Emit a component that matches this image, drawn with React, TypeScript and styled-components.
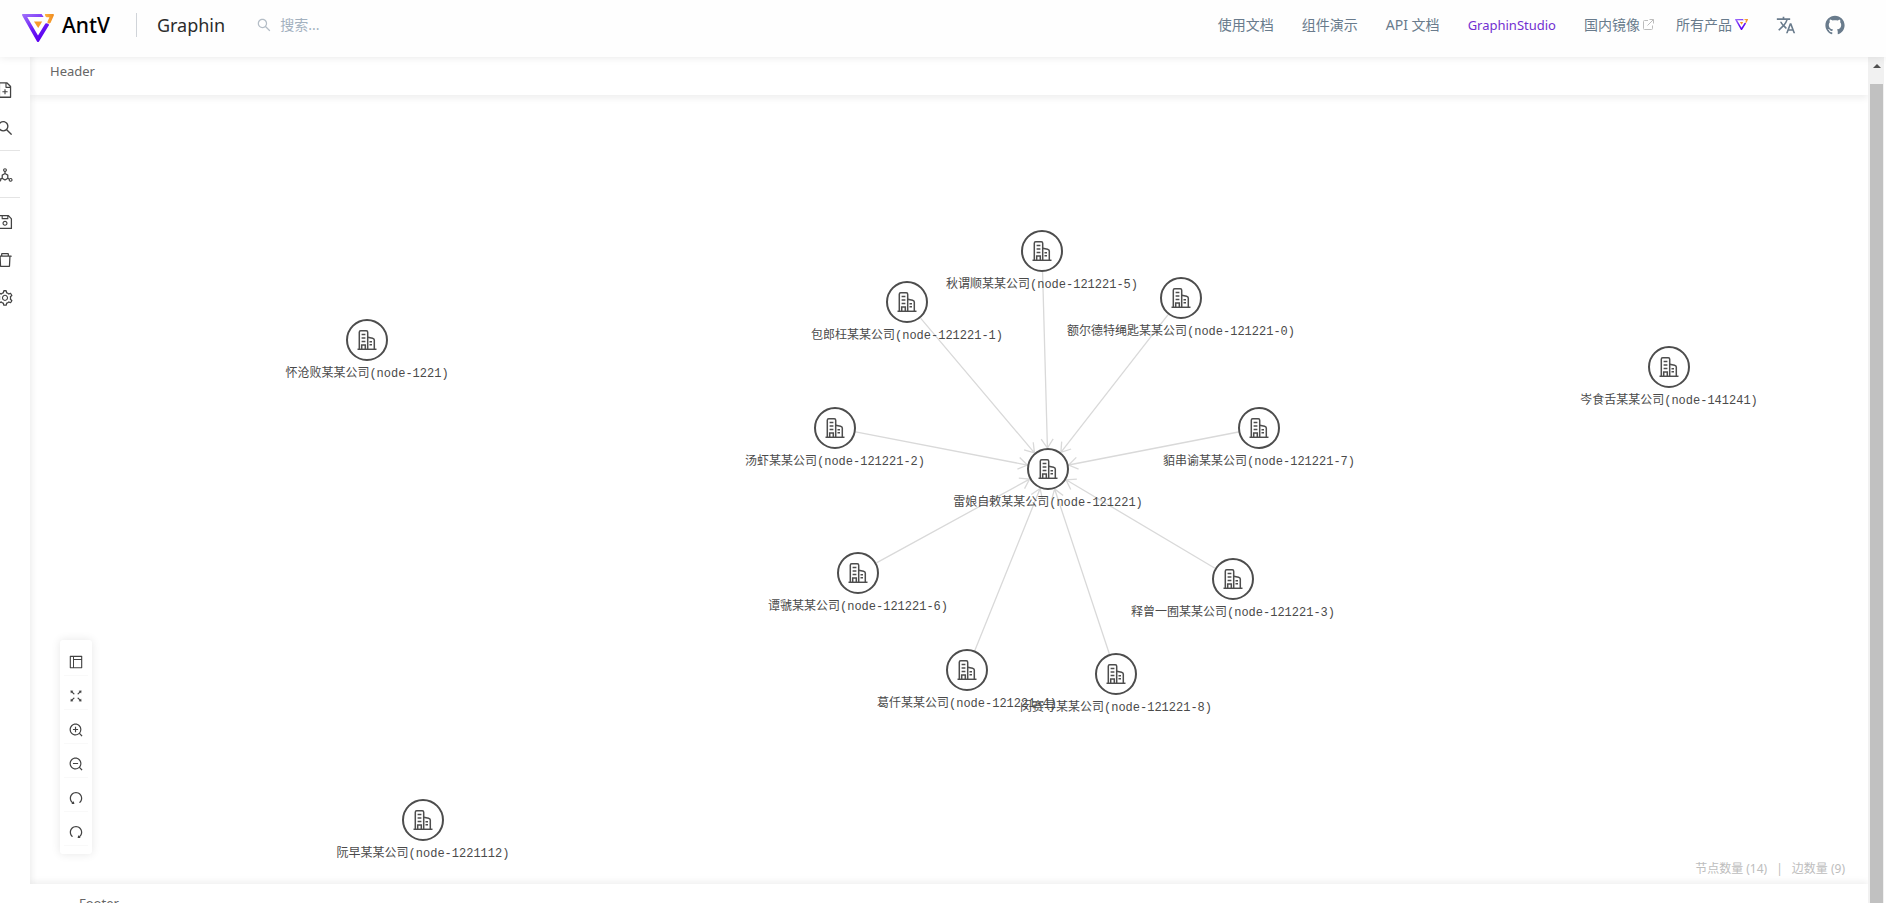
import React from "react";
import styled, { createGlobalStyle } from "styled-components";
import {
  AiFillGithub,
  AiOutlineDelete,
  AiOutlineDeploymentUnit,
  AiOutlineFileAdd,
  AiOutlineFullscreen,
  AiOutlineLayout,
  AiOutlineRedo,
  AiOutlineSave,
  AiOutlineSearch,
  AiOutlineSetting,
  AiOutlineUndo,
  AiOutlineZoomIn,
  AiOutlineZoomOut,
} from "react-icons/ai";
import { MdTranslate } from "react-icons/md";

const GlobalStyle = createGlobalStyle`
  *, *::before, *::after { box-sizing: border-box; }
  body {
    margin: 0;
    background: #fff;
    color: #666;
    font-family: "Noto Sans", "Noto Sans CJK SC", sans-serif;
    font-size: 14px;
    line-height: 22px;
  }
  button, input { font: inherit; }
`;

const Page = styled.div`
  display: flex;
  flex-direction: column;
  height: 100vh;
  overflow: hidden;
`;

/* ---------- site header ---------- */

const SiteHeader = styled.header`
  position: relative;
  z-index: 2;
  flex: none;
  display: flex;
  align-items: center;
  justify-content: space-between;
  height: 57px;
  padding: 0 40px 8px 22px;
  background: #fefefe;
  box-shadow: 0 1px 8px rgba(0, 0, 0, 0.08);
`;

const Brand = styled.div`
  display: flex;
  align-items: center;
`;

const BrandLink = styled.a`
  display: flex;
  align-items: center;
  gap: 8px;
  color: #000;
  font-size: 21px;
  font-weight: 500;
  text-decoration: none;

  svg {
    margin-top: 6px;
  }
`;

const ProductName = styled.a`
  margin-left: 20px;
  padding-left: 20px;
  border-left: 1px solid #d0d4d9;
  color: #2b2b2b;
  font-size: 18px;
  line-height: 24px;
  text-decoration: none;
`;

const BrandDivided = styled(ProductName)`
  margin-left: 26px;
`;

const SearchLabel = styled.label`
  display: flex;
  align-items: center;
  gap: 8px;
  margin-left: 31px;
  color: #b4bdc6;
`;

const SearchInput = styled.input`
  width: 160px;
  padding: 0;
  border: 0;
  outline: 0;
  background: transparent;
  color: #697b8c;

  &::placeholder {
    color: #a3b1bf;
    opacity: 1;
  }
`;

const Nav = styled.nav`
  display: flex;
  align-items: center;
  gap: 28px;
`;

const NavLink = styled.a<{ $active?: boolean }>`
  display: flex;
  align-items: center;
  gap: 3px;
  color: ${(p) => (p.$active ? "#722ed1" : "#697b8c")};
  font-size: ${(p) => (p.$active ? 13 : 14)}px;
  text-decoration: none;
  white-space: nowrap;
`;

const NavCluster = styled.div`
  display: flex;
  align-items: center;
  gap: 22px;
`;

/* ---------- workspace ---------- */

const Body = styled.div`
  flex: 1;
  display: flex;
  min-height: 0;
  padding-right: 2px;
`;

const Sidebar = styled.aside`
  position: relative;
  z-index: 1;
  flex: none;
  width: 30px;
  overflow: hidden;
  padding-top: 14px;
`;

/* The icon rail is scrolled partly past the left edge of the window. */
const Rail = styled.div`
  display: flex;
  flex-direction: column;
  width: 30px;
  margin-left: -10px;
`;

const RailButton = styled.button`
  display: flex;
  align-items: center;
  justify-content: center;
  height: 38px;
  padding: 0;
  border: 0;
  background: transparent;
  color: #434343;
  font-size: 18px;
`;

const RailDivider = styled.hr`
  width: 100%;
  margin: 3px 0 5px;
  border: 0;
  border-top: 1px solid #e4e4e4;
`;

const Workspace = styled.main`
  flex: 1;
  display: flex;
  flex-direction: column;
  min-width: 0;
  overflow: hidden;
  box-shadow: inset 6px 0 6px -4px rgba(0, 0, 0, 0.07);
`;

const PanelHeader = styled.div`
  flex: none;
  height: 38px;
  padding: 3px 20px;
  font-size: 13px;
  box-shadow: 0 3px 7px rgba(0, 0, 0, 0.07);
`;

const Canvas = styled.section`
  position: relative;
  flex: 1;
  min-height: 0;
`;

const PanelFooter = styled.footer`
  flex: none;
  height: 19px;
  padding: 8px 49px;
  overflow: hidden;
  background: #fff;
  font-size: 13px;
  box-shadow: 0 -2px 7px rgba(0, 0, 0, 0.07);
`;

const Edges = styled.svg`
  position: absolute;
  inset: 0;
  width: 100%;
  height: 100%;
`;

const Node = styled.div`
  position: absolute;
  display: flex;
  flex-direction: column;
  align-items: center;
  gap: 5px;
  width: 240px;
  margin: -21px 0 0 -120px;
`;

const NodeCircle = styled.div`
  display: flex;
  align-items: center;
  justify-content: center;
  width: 42px;
  height: 42px;
  border: 2px solid #4d4d4d;
  border-radius: 50%;
  background: #fff;
  color: #4d4d4d;
`;

const NodeLabel = styled.span`
  color: #4a4a4a;
  font-family: "Liberation Mono", "Noto Sans CJK SC", monospace;
  font-size: 12px;
  line-height: 16px;
  white-space: nowrap;
`;

const Toolbar = styled.div`
  position: absolute;
  left: 30px;
  bottom: 30px;
  display: flex;
  flex-direction: column;
  gap: 6px;
  width: 32px;
  padding: 8px 4px;
  border-radius: 3px;
  background: #fff;
  box-shadow: 0 0 10px rgba(0, 0, 0, 0.1);
`;

const ToolButton = styled.button`
  display: flex;
  align-items: center;
  justify-content: center;
  height: 28px;
  padding: 0;
  border: 0;
  border-bottom: 1px solid #f9f9f9;
  background: transparent;
  color: #434343;
  font-size: 16px;
`;

const Stats = styled.div`
  position: absolute;
  right: 23px;
  bottom: 6px;
  display: flex;
  gap: 9px;
  color: #bdbdbd;
  font-size: 12px;
  line-height: 18px;
`;

const ScrollTrack = styled.div`
  flex: none;
  display: flex;
  flex-direction: column;
  width: 16px;
  padding: 0 1px 0 2px;
  background: #f1f1f1;
`;

const ScrollArrow = styled.div`
  display: flex;
  align-items: center;
  justify-content: center;
  height: 27px;
  padding-bottom: 9px;
`;

const ScrollThumb = styled.div`
  flex: 1;
  background: #c1c1c1;
`;

/* ---------- drawings ---------- */

function AntVLogo({ width, id }: { width: number; id: string }) {
  return (
    <svg width={width} height={(width * 28) / 32} viewBox="0 0 32 28" aria-hidden="true">
      <defs>
        <linearGradient id={`${id}-p`} x1="0" y1="0" x2="0.5" y2="1">
          <stop offset="0" stopColor="#a274fb" />
          <stop offset="0.6" stopColor="#6a1bf5" />
          <stop offset="1" stopColor="#5b00f0" />
        </linearGradient>
        <linearGradient id={`${id}-o`} x1="0" y1="0" x2="1" y2="0">
          <stop offset="0" stopColor="#ffb341" />
          <stop offset="1" stopColor="#ee8a1e" />
        </linearGradient>
      </defs>
      <path
        d="M0 0.7Q0 0 0.8 0H19.6L21.6 3H5.2L16 21.6 23.4 9.6Q25.6 8.6 27.2 10.8L17 27.4Q16 28.6 15 27.4L0.3 1.8Z"
        fill={`url(#${id}-p)`}
      />
      <path
        d="M23 0H31Q32.4 0.2 31.8 1.6L28.6 8.8Q26.8 10.4 25.2 8.2L27.4 3.2H24.6Q22.6 2.2 23 0Z"
        fill={`url(#${id}-o)`}
      />
      <path d="M12 7.4H20.2L16.2 14Z" fill="#f79a2b" />
    </svg>
  );
}

const ExternalIcon = () => (
  <svg width="11" height="11" viewBox="0 0 11 11" fill="none" stroke="#bcbcbc" aria-hidden="true">
    <path d="M5 1.5H1.5A1 1 0 0 0 .5 2.500V9.500A1 1 0 0 0 1.500 10.500H8.500A1 1 0 0 0 9.500 9.500V6.500M6.500 .5H10.500V4.500M10.300 .7L4.500 6.500" />
  </svg>
);

const BuildingIcon = () => (
  <svg width="20" height="20" viewBox="0 0 20 20" fill="none" stroke="currentColor" strokeWidth="1.5" aria-hidden="true">
    <path d="M0.5 19.300H19.500" />
    <path d="M2.300 19V2.200Q2.300.8 3.700.8H9.300Q10.700.8 10.700 2.200V19" />
    <path d="M10.700 7.300L15.600 8.300Q17.300 8.700 17.300 10V19" />
    <path d="M4.600 4.500H8.400M4.600 8H8.400M4.600 11.500H8.400M12.500 11.800H15M12.500 14.800H15" />
    <path d="M4.700 19V15H8.300V19" />
  </svg>
);

/* ---------- data ---------- */

type GraphNode = { id: string; name: string; x: number; y: number };

const NODE_RADIUS = 21;
const HUB_ID = "121221";

/* Coordinates are relative to the canvas origin. */
const nodes: GraphNode[] = [
  { id: "1221", name: "怀沧败某某公司", x: 337, y: 245 },
  { id: "1221112", name: "阮早某某公司", x: 393, y: 725 },
  { id: "141241", name: "岑食舌某某公司", x: 1639, y: 272 },
  { id: "121221", name: "雷娘自敕某某公司", x: 1018, y: 374 },
  { id: "121221-0", name: "额尔德特绳匙某某公司", x: 1151, y: 203 },
  { id: "121221-1", name: "包郎枉某某公司", x: 877, y: 207 },
  { id: "121221-2", name: "汤虾某某公司", x: 805, y: 333 },
  { id: "121221-3", name: "释曾一囿某某公司", x: 1203, y: 484 },
  { id: "121221-4", name: "葛仟某某公司", x: 937, y: 575 },
  { id: "121221-5", name: "秋谓顺某某公司", x: 1012, y: 156 },
  { id: "121221-6", name: "谭虢某某公司", x: 828, y: 478 },
  { id: "121221-7", name: "貊串谕某某公司", x: 1229, y: 333 },
  { id: "121221-8", name: "闵赛寻某某公司", x: 1086, y: 579 },
];

const hub = nodes.find((n) => n.id === HUB_ID)!;
const spokes = nodes.filter((n) => n.id.startsWith(`${HUB_ID}-`));

const tools = [
  { label: "布局", icon: <AiOutlineLayout /> },
  { label: "全屏", icon: <AiOutlineFullscreen /> },
  { label: "放大", icon: <AiOutlineZoomIn /> },
  { label: "缩小", icon: <AiOutlineZoomOut /> },
  { label: "撤销", icon: <AiOutlineUndo /> },
  { label: "重做", icon: <AiOutlineRedo /> },
];

function Edge({ from, to }: { from: GraphNode; to: GraphNode }) {
  const dx = to.x - from.x;
  const dy = to.y - from.y;
  const length = Math.hypot(dx, dy);
  const angle = (Math.atan2(dy, dx) * 180) / Math.PI;
  const tip = length - NODE_RADIUS;
  return (
    <g transform={`translate(${from.x} ${from.y}) rotate(${angle})`}>
      <path d={`M${NODE_RADIUS} 0H${tip}M${tip - 9} -6L${tip} 0L${tip - 9} 6`} />
    </g>
  );
}

export default function App() {
  return (
    <Page>
      <GlobalStyle />
      <SiteHeader>
        <Brand>
          <BrandLink href="#antv">
            <AntVLogo width={32} id="brand" />
            AntV
          </BrandLink>
          <BrandDivided href="#graphin">Graphin</BrandDivided>
          <SearchLabel>
            <AiOutlineSearch size={16} />
            <SearchInput type="text" placeholder="搜索..." aria-label="搜索" />
          </SearchLabel>
        </Brand>
        <Nav>
          <NavLink href="#docs">使用文档</NavLink>
          <NavLink href="#demos">组件演示</NavLink>
          <NavLink href="#api">API 文档</NavLink>
          <NavLink href="#studio" $active>
            GraphinStudio
          </NavLink>
          <NavCluster>
            <NavLink href="#mirror">
              国内镜像
              <ExternalIcon />
            </NavLink>
            <NavLink href="#products">
              所有产品
              <AntVLogo width={13} id="products" />
            </NavLink>
          </NavCluster>
          <NavLink href="#language" aria-label="切换语言">
            <MdTranslate size={20} />
          </NavLink>
          <NavLink href="#github" aria-label="GitHub">
            <AiFillGithub size={22} />
          </NavLink>
        </Nav>
      </SiteHeader>

      <Body>
        <Sidebar>
          <Rail>
            <RailButton aria-label="新建"><AiOutlineFileAdd /></RailButton>
            <RailButton aria-label="查找"><AiOutlineSearch /></RailButton>
            <RailDivider />
            <RailButton aria-label="布局"><AiOutlineDeploymentUnit /></RailButton>
            <RailDivider />
            <RailButton aria-label="保存"><AiOutlineSave /></RailButton>
            <RailButton aria-label="删除"><AiOutlineDelete /></RailButton>
            <RailButton aria-label="设置"><AiOutlineSetting /></RailButton>
          </Rail>
        </Sidebar>

        <Workspace>
          <PanelHeader>Header</PanelHeader>
          <Canvas>
            <Edges fill="none" stroke="#d9d9d9" strokeWidth="1.3">
              {spokes.map((n) => (
                <Edge key={n.id} from={n} to={hub} />
              ))}
            </Edges>
            {nodes.map((n) => (
              <Node key={n.id} style={{ left: n.x, top: n.y }}>
                <NodeCircle>
                  <BuildingIcon />
                </NodeCircle>
                <NodeLabel>{`${n.name}(node-${n.id})`}</NodeLabel>
              </Node>
            ))}
            <Toolbar>
              {tools.map((t) => (
                <ToolButton key={t.label} aria-label={t.label}>
                  {t.icon}
                </ToolButton>
              ))}
            </Toolbar>
            <Stats>
              <span>节点数量 (14)</span>
              <span>|</span>
              <span>边数量 (9)</span>
            </Stats>
          </Canvas>
          <PanelFooter>Footer</PanelFooter>
        </Workspace>

        <ScrollTrack>
          <ScrollArrow>
            <svg width="8" height="4" viewBox="0 0 8 4" aria-hidden="true">
              <path d="M0 4L4 0L8 4Z" fill="#505050" />
            </svg>
          </ScrollArrow>
          <ScrollThumb />
        </ScrollTrack>
      </Body>
    </Page>
  );
}
